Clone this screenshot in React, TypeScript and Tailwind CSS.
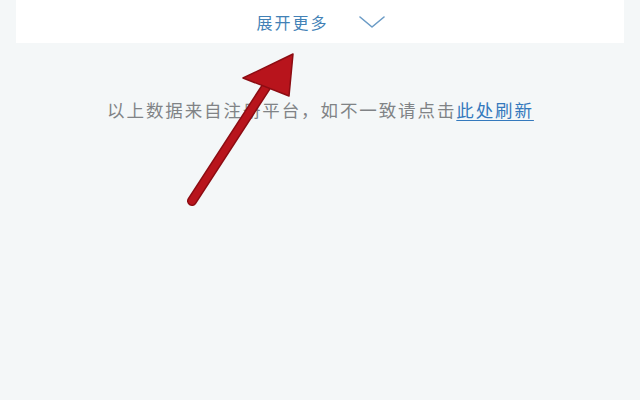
import React from "react";

export default function App() {
  return (
    <div
      className="relative w-[640px] h-[400px] overflow-hidden bg-[#f4f7f8]"
      style={{ fontFamily: '"Noto Sans CJK SC", "Noto Sans", sans-serif' }}
    >
      <div className="mx-4 h-[43px] bg-white flex items-center justify-center gap-[30px]">
        <span className="text-[16px] tracking-[2px] text-[#4281b6] leading-none pl-[1px]">展开更多</span>
        <svg width="26" height="12" viewBox="0 0 26 12" className="mt-[1px]">
          <path d="M1 1 L13 11 L25 1" fill="none" stroke="#6b9bc6" strokeWidth="1.6" strokeLinecap="round" strokeLinejoin="round" />
        </svg>
      </div>
      <div className="mt-[58px] flex justify-center">
        <p className="text-[17.5px] tracking-[1.9px] text-[#808386] leading-none whitespace-nowrap pl-[1px]">
          以上数据来自注册平台，如不一致请点击
          <span className="text-[#3479bd] underline underline-offset-[3px]">此处刷新</span>
        </p>
      </div>
      <svg
        className="absolute left-0 top-0 pointer-events-none"
        width="640"
        height="400"
        viewBox="0 0 640 400"
      >
        <line x1="192" y1="201" x2="268" y2="84" stroke="#8c0c12" strokeWidth="10" strokeLinecap="round" />
        <line x1="192" y1="201" x2="268" y2="84" stroke="#b8141c" strokeWidth="7" strokeLinecap="round" />
        <polygon points="293,54 243,78 289,96" fill="#b8141c" stroke="#8c0c12" strokeWidth="1.5" strokeLinejoin="round" />
      </svg>
    </div>
  );
}
